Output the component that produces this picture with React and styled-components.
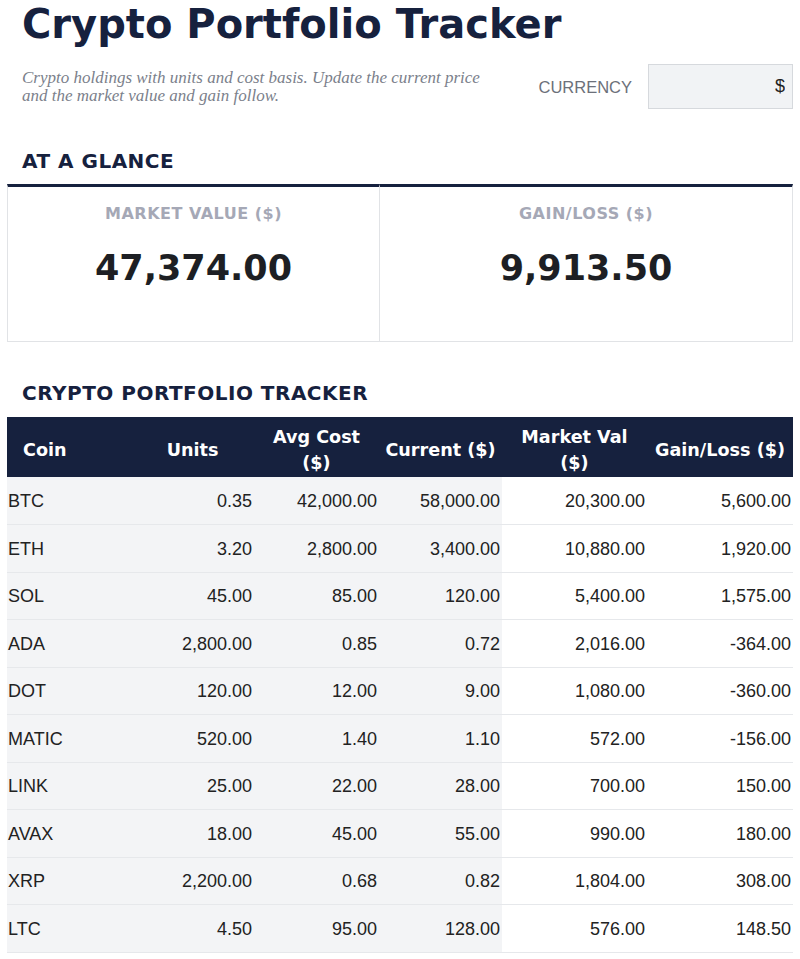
import React from "react"
import styled, { createGlobalStyle } from "styled-components"

const navy = "#16213e"

const holdings = [
  ["BTC", "0.35", "42,000.00", "58,000.00", "20,300.00", "5,600.00"],
  ["ETH", "3.20", "2,800.00", "3,400.00", "10,880.00", "1,920.00"],
  ["SOL", "45.00", "85.00", "120.00", "5,400.00", "1,575.00"],
  ["ADA", "2,800.00", "0.85", "0.72", "2,016.00", "-364.00"],
  ["DOT", "120.00", "12.00", "9.00", "1,080.00", "-360.00"],
  ["MATIC", "520.00", "1.40", "1.10", "572.00", "-156.00"],
  ["LINK", "25.00", "22.00", "28.00", "700.00", "150.00"],
  ["AVAX", "18.00", "45.00", "55.00", "990.00", "180.00"],
  ["XRP", "2,200.00", "0.68", "0.82", "1,804.00", "308.00"],
  ["LTC", "4.50", "95.00", "128.00", "576.00", "148.50"],
]

const columns = [
  { label: "Coin", width: 124, align: "left" },
  { label: "Units", width: 123 },
  { label: "Avg Cost ($)", width: 125 },
  { label: "Current ($)", width: 123 },
  { label: "Market Val ($)", width: 145 },
  { label: "Gain/Loss ($)", width: 146 },
]

const App = () => {
  return (
    <>
      <GlobalStyle />
      <Page>
        <Title>Crypto Portfolio Tracker</Title>
        <IntroRow>
          <Subtitle>
            Crypto holdings with units and cost basis. Update the current price
            and the market value and gain follow.
          </Subtitle>
          <CurrencyGroup>
            <CurrencyLabel>CURRENCY</CurrencyLabel>
            <CurrencyInput readOnly value="$" />
          </CurrencyGroup>
        </IntroRow>

        <SectionTitle>AT A GLANCE</SectionTitle>
        <Glance>
          <Card>
            <CardLabel>MARKET VALUE ($)</CardLabel>
            <CardValue>47,374.00</CardValue>
          </Card>
          <Card>
            <CardLabel>GAIN/LOSS ($)</CardLabel>
            <CardValue>9,913.50</CardValue>
          </Card>
        </Glance>

        <SectionTitle $spaced>CRYPTO PORTFOLIO TRACKER</SectionTitle>
        <Table>
          <colgroup>
            {columns.map((c) => (
              <col key={c.label} style={{ width: c.width }} />
            ))}
          </colgroup>
          <thead>
            <tr>
              {columns.map((c) => (
                <Th key={c.label} $align={c.align}>
                  {c.label}
                </Th>
              ))}
            </tr>
          </thead>
          <tbody>
            {holdings.map((row) => (
              <tr key={row[0]}>
                {row.map((cell, i) => (
                  <Td key={i} $first={i === 0} $shaded={i < 4}>
                    {cell}
                  </Td>
                ))}
              </tr>
            ))}
          </tbody>
        </Table>
      </Page>
    </>
  )
}

export default App

const GlobalStyle = createGlobalStyle`
  body {
    margin: 0;
    background: #fff;
    font-family: "Liberation Sans", Arial, sans-serif;
  }
`

const Page = styled.div`
  padding: 0 7px;
`

const Title = styled.h1`
  margin: 4px 0 0;
  padding-left: 15px;
  font-family: "DejaVu Sans", sans-serif;
  font-weight: 700;
  font-size: 40px;
  line-height: 40px;
  color: ${navy};
`

const IntroRow = styled.div`
  display: flex;
  justify-content: space-between;
  align-items: center;
  margin-top: 20px;
  padding-left: 15px;
`

const Subtitle = styled.p`
  margin: 0;
  max-width: 470px;
  font-family: "Liberation Serif", "Times New Roman", serif;
  font-style: italic;
  font-size: 17px;
  line-height: 18px;
  color: #7b7f8b;
`

const CurrencyGroup = styled.div`
  display: flex;
  align-items: center;
  gap: 16px;
`

const CurrencyLabel = styled.span`
  margin-top: 2px;
  font-size: 16.5px;
  color: #6c707a;
`

const CurrencyInput = styled.input`
  box-sizing: border-box;
  width: 145px;
  height: 45px;
  padding: 0 7px;
  border: 1px solid #d6d9dd;
  background: #f1f3f5;
  font-family: "Liberation Sans", Arial, sans-serif;
  font-size: 18px;
  color: #222;
  text-align: right;
  outline: none;
`

const SectionTitle = styled.h2`
  margin: ${(p) => (p.$spaced ? "39px 0 12px" : "40px 0 11px")};
  padding-left: 15px;
  font-family: "DejaVu Sans", sans-serif;
  font-weight: 700;
  font-size: 20px;
  line-height: 24px;
  letter-spacing: 0.5px;
  color: ${navy};
`

const Glance = styled.div`
  display: grid;
  grid-template-columns: 373px 1fr;
`

const Card = styled.div`
  box-sizing: border-box;
  height: 158px;
  padding-top: 17px;
  border: 1px solid #e1e3e6;
  border-top: 3px solid ${navy};
  text-align: center;

  & + & {
    border-left: none;
  }
`

const CardLabel = styled.div`
  font-family: "DejaVu Sans", sans-serif;
  font-weight: 700;
  font-size: 16px;
  line-height: 20px;
  letter-spacing: 0.5px;
  color: #a5a8b6;
`

const CardValue = styled.div`
  margin-top: 23px;
  font-family: "DejaVu Sans", sans-serif;
  font-weight: 700;
  font-size: 35px;
  line-height: 42px;
  color: #1d1f24;
`

const Table = styled.table`
  width: 786px;
  table-layout: fixed;
  border-collapse: collapse;
`

const Th = styled.th`
  box-sizing: border-box;
  height: 60px;
  padding: 7px 4px 1px ${(p) => (p.$align === "left" ? "16px" : "4px")};
  background: ${navy};
  color: #fff;
  font-family: "DejaVu Sans", sans-serif;
  font-weight: 700;
  font-size: 17.6px;
  line-height: 26px;
  text-align: ${(p) => p.$align || "center"};
`

const Td = styled.td`
  box-sizing: border-box;
  height: 47.5px;
  padding: 2px 2px 0 ${(p) => (p.$first ? "1px" : "2px")};
  border-bottom: 1px solid #e6e8eb;
  background: ${(p) => (p.$shaded ? "#f3f4f6" : "#fff")};
  font-size: 18px;
  color: #222;
  text-align: ${(p) => (p.$first ? "left" : "right")};
`
